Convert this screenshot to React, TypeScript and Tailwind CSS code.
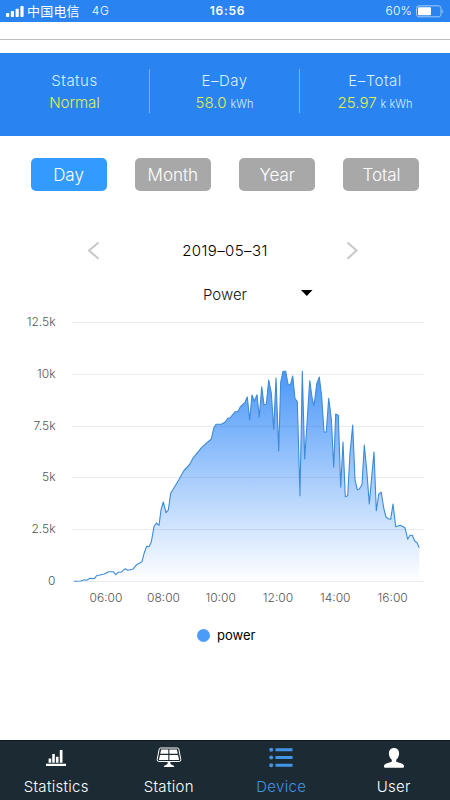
import React, { useState } from 'react';

type Point = [number, number];

const POWER_POINTS: Point[] = [
  [74, 581.3], [80.7, 581], [84.7, 579.7], [86.7, 580.2], [90, 578.3], [94.3, 578.6], [96.7, 575.7],
  [104.3, 574], [108.7, 571.7], [113.3, 571.7], [115.7, 574.7], [118, 572.3], [121, 572.3],
  [125.3, 568.7], [127.7, 570.3], [132.7, 569.3], [136.7, 564.7], [142, 561.7], [144.3, 552.7],
  [146.7, 546.3], [149, 546.7], [151.3, 542], [154, 526.7], [156.3, 523], [159, 525.3],
  [161, 510], [163.3, 502], [166, 512.7], [168.3, 510], [170.7, 493.3], [178.7, 480],
  [184, 470.5], [189.3, 465], [192.7, 458.7], [201.7, 447.3], [211.3, 439], [213.7, 428.3],
  [216, 424.3], [221.3, 424.3], [225.3, 422], [228, 418], [230.3, 417.7], [235.3, 411.7],
  [238, 411.3], [240.7, 406.3], [245, 402.3], [247.3, 397], [249.7, 420], [252, 395],
  [254.3, 401.3], [257, 394.7], [259.3, 417.3], [261.7, 386.7], [264, 404.5], [266.3, 404.3],
  [268.7, 380], [271.3, 393], [273.7, 429.3], [276, 378], [278.7, 451], [280.7, 382],
  [283, 371.3], [285.7, 371.3], [288, 384], [290.3, 385.3], [292.7, 376], [295, 398.7],
  [297.3, 401.7], [300, 495.7], [302.3, 371.3], [304.7, 459], [307, 423], [309.7, 380.7],
  [312, 397.3], [314, 406], [316.7, 384], [319.3, 377], [321.7, 396.7], [324, 432],
  [326.3, 432], [328.7, 398.3], [331.3, 418.7], [333.7, 467], [335.7, 414], [338.3, 415.3],
  [340.7, 487.3], [343, 442], [345.3, 496.7], [347.7, 495.7], [350, 453], [352.7, 425],
  [355, 480], [357.3, 489.7], [359.3, 489], [362, 484.7], [364.3, 445], [366.7, 470],
  [369.3, 504], [371.7, 476.7], [374, 452], [376.3, 510.7], [378.7, 494.3], [381.3, 492.3],
  [383.7, 508], [386, 517], [388.3, 518.7], [390.7, 519.3], [393, 504], [395.7, 526.7],
  [400.3, 525.3], [405, 527.7], [407.7, 539.3], [410, 535.3], [412.3, 535.3], [414.7, 541],
  [417, 542.7], [419.3, 547.7],
];

const Y_TICKS = [
  { label: '12.5k', y: 322.5 },
  { label: '10k', y: 374.5 },
  { label: '7.5k', y: 426.5 },
  { label: '5k', y: 477.5 },
  { label: '2.5k', y: 529.5 },
  { label: '0', y: 581.5 },
];

const X_TICKS = [
  { label: '06:00', x: 106 },
  { label: '08:00', x: 163.5 },
  { label: '10:00', x: 220.7 },
  { label: '12:00', x: 278 },
  { label: '14:00', x: 335.3 },
  { label: '16:00', x: 392.7 },
];

const StatusBar: React.FC = () => (
  <div className="grid h-[22px] grid-cols-3 items-center bg-[#2983f0] pr-1.5 pl-1.5 text-white">
    <div className="flex items-center">
      <svg width="18" height="11" viewBox="0 0 18 11" fill="currentColor">
        <rect x="0" y="7" width="3.2" height="4" rx="0.8" />
        <rect x="4.8" y="5" width="3.2" height="6" rx="0.8" />
        <rect x="9.6" y="2.8" width="3.2" height="8.2" rx="0.8" />
        <rect x="14.4" y="0" width="3.2" height="11" rx="0.8" />
      </svg>
      <span className="ml-[3px] font-['Noto_Sans_CJK_SC',sans-serif] text-[13px] leading-[22px] tracking-[0.2px]">中国电信</span>
      <span className="ml-3 text-[12px] font-light tracking-[0.6px]">4G</span>
    </div>
    <div className="pl-[5px] text-center text-[12px] font-semibold tracking-[0.7px]">16:56</div>
    <div className="flex items-center justify-end">
      <span className="text-[12px] font-light tracking-[0.2px]">60%</span>
      <svg className="ml-1" width="28" height="13" viewBox="0 0 28 13">
        <rect x="0.5" y="0.8" width="24.5" height="11" rx="2.5" fill="none" stroke="#a5caf8" />
        <rect x="2" y="2.3" width="13" height="8" rx="1" fill="white" />
        <path d="M26.3 4.4c1.3.5 1.3 3.3 0 3.8z" fill="#a5caf8" />
      </svg>
    </div>
  </div>
);

interface SummaryItemProps {
  label: string;
  value: string;
  unit?: string;
}

const SummaryItem: React.FC<SummaryItemProps> = ({ label, value, unit }) => (
  <div className="flex h-11 flex-col items-center pt-px">
    <span className="text-[15px] leading-[22px] font-light tracking-[0.5px] text-[#d9f1ff]">{label}</span>
    <span className="text-[15px] leading-[22px] font-light text-[#e2f04c]">
      {value}
      {unit && <span className="ml-1 text-[11px] text-[#d9f1ff]">{unit}</span>}
    </span>
  </div>
);

const PowerChart: React.FC = () => {
  const line = POWER_POINTS.map(([x, y]) => `${x},${y}`).join(' ');

  return (
    <svg className="block" width="450" height="300" viewBox="0 310 450 300">
      <defs>
        <linearGradient id="powerFill" x1="0" y1="371" x2="0" y2="581" gradientUnits="userSpaceOnUse">
          <stop offset="0" stopColor="#4a97f9" />
          <stop offset="1" stopColor="#ffffff" />
        </linearGradient>
      </defs>

      <polygon points={`74,581.5 ${line} 419.3,581.5`} fill="url(#powerFill)" />

      {Y_TICKS.map(({ label, y }) => (
        <g key={label}>
          <line x1="72" x2="424" y1={y} y2={y} stroke="#5a6478" strokeOpacity="0.13" />
          <text x="55.5" y={y + 3.2} textAnchor="end" className="fill-[#555] text-[12px] font-light">
            {label}
          </text>
        </g>
      ))}

      <polyline points={line} fill="none" stroke="#3d8bd8" strokeWidth="1.1" strokeLinejoin="round" />

      {X_TICKS.map(({ label, x }) => (
        <text key={label} x={x} y="602.3" textAnchor="middle" className="fill-[#555] text-[12px] font-light">
          {label}
        </text>
      ))}
    </svg>
  );
};

const StatisticsIcon = () => (
  <svg width="20" height="18" viewBox="0 0 20 18" fill="currentColor">
    <path d="M0 14.8h20V17H0zM2.6 9.5h2.6v4.3H2.6zM6.2 5h2.6v8.8H6.2zM9.9 7.8h2.6v6H9.9zM13.8 1h2.7v12.8h-2.7z" />
  </svg>
);

const StationIcon = () => (
  <svg width="26" height="21" viewBox="0 0 26 21">
    <path d="M4.7 1h16.6q1.2 0 1.5 1.1l2 10.4q.3 2-1.6 2H2.8q-1.9 0-1.6-2L3.2 2.1Q3.5 1 4.7 1z" fill="none" stroke="currentColor" />
    <path d="M5.2 2.5h7.1v4.3H4.2zM13.4 2.5h7.4l1 4.3h-8.4zM4 7.9h8.3v5H2.9zM13.4 7.9H22l1.1 5h-9.7z" fill="currentColor" />
    <path d="M11.6 15h2.8v2l3.7 2v1H7.9v-1l3.7-2z" fill="currentColor" />
  </svg>
);

const DeviceIcon = () => (
  <svg width="24" height="21" viewBox="0 0 24 21" fill="currentColor">
    <circle cx="2.2" cy="2.7" r="2" />
    <circle cx="2.2" cy="10.5" r="2" />
    <circle cx="2.2" cy="18.3" r="2" />
    <path d="M6.5 1.2h17v3h-17zM6.5 9h17v3h-17zM6.5 16.8h17v3h-17z" />
  </svg>
);

const UserIcon = () => (
  <svg width="20" height="20" viewBox="0 0 20 20" fill="currentColor">
    <path d="M10 0C6.9 0 4.9 2.2 4.9 5.3c0 2.8 1.1 5.2 2.9 6.4v2L2.4 15.6C.7 16.2 0 17.1 0 18.3c0 1 .5 1.5 1.5 1.5h17c1 0 1.5-.5 1.5-1.5 0-1.2-.7-2.1-2.4-2.7l-5.4-1.9v-2c1.8-1.2 2.9-3.6 2.9-6.4C15.1 2.2 13.1 0 10 0z" />
  </svg>
);

const PERIODS = ['Day', 'Month', 'Year', 'Total'];

const TABS = [
  { name: 'Statistics', icon: <StatisticsIcon /> },
  { name: 'Station', icon: <StationIcon /> },
  { name: 'Device', icon: <DeviceIcon /> },
  { name: 'User', icon: <UserIcon /> },
];

const App: React.FC = () => {
  const [period, setPeriod] = useState('Day');
  const [tab, setTab] = useState('Device');

  return (
    <div className="flex h-[800px] w-[450px] flex-col overflow-hidden bg-white font-[Inter,'Liberation_Sans',sans-serif]">
      <StatusBar />

      <div className="h-[18px] border-b border-[#b9bdbd]" />

      {/* Device summary */}
      <div className="mt-[13px] grid h-[83px] grid-cols-3 divide-x divide-[#78b4f8] bg-[#2983f0] pt-4">
        <SummaryItem label="Status" value="Normal" />
        <SummaryItem label="E–Day" value="58.0" unit="kWh" />
        <SummaryItem label="E–Total" value="25.97" unit="k kWh" />
      </div>

      {/* Period buttons */}
      <div className="mt-[22px] flex justify-between px-[30.5px]">
        {PERIODS.map((name) => (
          <button
            key={name}
            onClick={() => setPeriod(name)}
            className={`h-[33px] w-[76px] rounded-[5px] pt-0.5 text-[17px] font-light text-white ${
              name === period ? 'bg-[#339bfd]' : 'bg-[#a8a8a8]'
            }`}
          >
            {name}
          </button>
        ))}
      </div>

      {/* Date picker */}
      <div className="mt-[45px] flex h-[30px] items-center justify-between pr-[91px] pl-[87px]">
        <svg className="-mt-0.5" width="13" height="19" viewBox="0 0 13 19" fill="none" stroke="#c8c8c8" strokeWidth="2">
          <path d="M11.5 1.5L2 9.5l9.5 8.2" />
        </svg>
        <span className="ml-1 text-[15px] font-light tracking-[0.4px] text-black">2019–05–31</span>
        <svg className="-mt-0.5" width="13" height="19" viewBox="0 0 13 19" fill="none" stroke="#c8c8c8" strokeWidth="2">
          <path d="M1.5 1.5l9 8-9 8.2" />
        </svg>
      </div>

      <div className="mt-[14px] flex h-[30px] items-center pl-[203px]">
        <span className="w-[98px] text-[15px] font-light text-[#111]">Power</span>
        <svg className="-mt-1" width="12" height="6" viewBox="0 0 12 6">
          <path d="M0 0h11.5L5.8 6z" fill="black" />
        </svg>
      </div>

      <PowerChart />

      <div className="mt-[15px] flex h-5 items-center pl-[197px]">
        <span className="h-[13px] w-[13px] rounded-full bg-[#4b9cf8]" />
        <span className="mt-0.5 ml-[7px] text-[13px] text-black">power</span>
      </div>

      {/* Bottom navigation */}
      <nav className="mt-auto grid h-[60px] grid-cols-4 border-t border-[#0e151b] bg-[#1c2a34]">
        {TABS.map(({ name, icon }) => (
          <button
            key={name}
            onClick={() => setTab(name)}
            className={`flex flex-col items-center pt-[5px] ${name === tab ? 'text-[#4195e6]' : 'text-white'}`}
          >
            <span className="flex h-[23px] items-center">{icon}</span>
            <span className="mt-[7px] text-[15px] leading-[22px] font-light tracking-[0.3px]">{name}</span>
          </button>
        ))}
      </nav>
    </div>
  );
};

export default App;
